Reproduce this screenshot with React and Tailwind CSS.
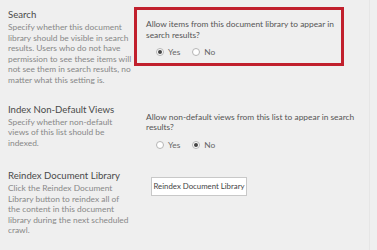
import React from 'react';

const Radio = ({ checked, label }) => (
  <label className="flex items-center gap-[4px]">
    <span className="w-[8px] h-[8px] rounded-full border border-[#b5b5b5] bg-white flex items-center justify-center">
      {checked && <span className="w-[4px] h-[4px] rounded-full bg-[#444]" />}
    </span>
    <span>{label}</span>
  </label>
);

const SectionLeft = ({ title, lines }) => (
  <div className="w-[134px] pl-[8px] pr-[4px] shrink-0">
    <div className="text-[9.6px] leading-[13px] text-[#4a4a4a] mt-[1px]">{title}</div>
    <div className="text-[8.4px] leading-[10.6px] text-[#888] mt-[1px]">
      {lines.map((l, i) => (
        <div key={i} className="whitespace-nowrap">{l}</div>
      ))}
    </div>
  </div>
);

const App = () => {
  return (
    <div className="w-[377px] h-[250px] bg-[#efefef] overflow-hidden font-['Lato',sans-serif] relative">
      <div className="absolute top-0 bottom-0 left-[369px] w-px bg-[#e6e6e6]" />

      <div className="flex pt-[7px]">
        <SectionLeft
          title="Search"
          lines={[
            'Specify whether this document',
            'library should be visible in search',
            'results. Users who do not have',
            'permission to see these items will',
            'not see them in search results, no',
            'matter what this setting is.',
          ]}
        />
        <div className="w-[210px] h-[59px] border-[3px] border-[#c1202d] pl-[9px] pt-[9px] text-[8.4px] leading-[10.5px] text-[#555]">
          <div className="whitespace-nowrap">Allow items from this document library to appear in</div>
          <div>search results?</div>
          <div className="flex gap-[12px] mt-[7px] pl-[10px] text-[#666]">
            <Radio checked label="Yes" />
            <Radio label="No" />
          </div>
        </div>
      </div>

      <div className="flex mt-[16px]">
        <SectionLeft
          title="Index Non-Default Views"
          lines={['Specify whether non-default', 'views of this list should be', 'indexed.']}
        />
        <div className="pl-[12px] pt-[10px] text-[8.4px] leading-[10.5px] text-[#555]">
          <div className="whitespace-nowrap">Allow non-default views from this list to appear in search</div>
          <div>results?</div>
          <div className="flex gap-[12px] mt-[7px] pl-[10px] text-[#666]">
            <Radio label="Yes" />
            <Radio checked label="No" />
          </div>
        </div>
      </div>

      <div className="flex mt-[18px]">
        <SectionLeft
          title="Reindex Document Library"
          lines={[
            'Click the Reindex Document',
            'Library button to reindex all of',
            'the content in this document',
            'library during the next scheduled',
            'crawl.',
          ]}
        />
        <div className="pl-[17px] pt-[9px]">
          <button className="w-[96px] h-[19px] bg-white border border-[#c8c8c8] text-[7.8px] text-[#444] flex items-center justify-center whitespace-nowrap">
            Reindex Document Library
          </button>
        </div>
      </div>
    </div>
  );
};

export default App;
